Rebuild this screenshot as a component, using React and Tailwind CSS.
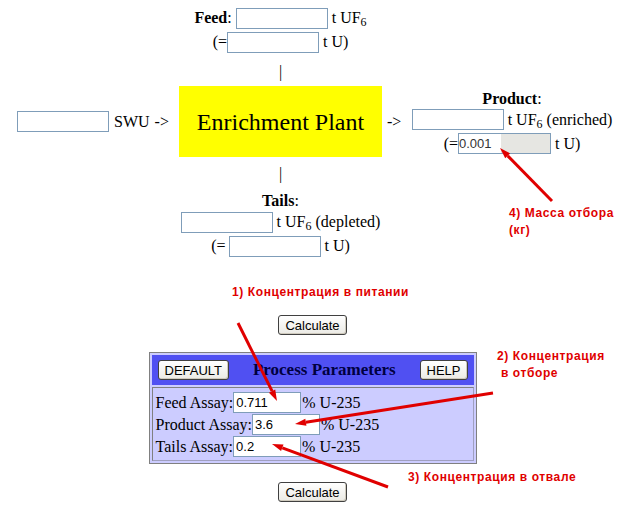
import React from "react";

const inputBase =
  "h-[21px] border border-[#7f9db9] bg-white px-[2px] font-['Liberation_Sans',Arial,sans-serif] text-[13px] text-black outline-none";

const Field = ({ width = "w-[92px]", value = "", className = "" }) => (
  <input readOnly value={value} className={`${inputBase} ${width} ${className}`} />
);

const XpButton = ({ children }) => (
  <button className="h-[20px] px-[6px] rounded-[3px] border border-[#404040] bg-[linear-gradient(#ffffff,#ebeae4)] font-['Liberation_Sans',Arial,sans-serif] text-[13px] leading-none text-black shadow-[inset_-1px_-1px_0_#cfcabd]">
    {children}
  </button>
);

// red callout arrows, tip at "to"
const arrows = [
  { from: [238, 323], to: [277, 401] },
  { from: [493, 393], to: [295, 424] },
  { from: [388, 487], to: [272, 444] },
  { from: [552, 201], to: [500, 148] }
];

const Arrow = ({ from, to }) => {
  const [x1, y1] = from;
  const [x2, y2] = to;
  const len = Math.hypot(x2 - x1, y2 - y1);
  const ux = (x2 - x1) / len;
  const uy = (y2 - y1) / len;
  const bx = x2 - ux * 11;
  const by = y2 - uy * 11;
  const px = -uy * 3.5;
  const py = ux * 3.5;
  return (
    <g>
      <line x1={x1} y1={y1} x2={bx} y2={by} stroke="#e00000" strokeWidth="3" />
      <polygon
        points={`${x2},${y2} ${bx + px},${by + py} ${bx - px},${by - py}`}
        fill="#e00000"
      />
    </g>
  );
};

const Note = ({ className, children }) => (
  <div
    className={`absolute whitespace-pre font-['Liberation_Sans',Arial,sans-serif] text-[12px] font-bold leading-[17px] tracking-[0.6px] text-[#e00000] ${className}`}
  >
    {children}
  </div>
);

const App = () => {
  return (
    <div className="relative w-[618px] h-[514px] overflow-hidden bg-white font-['Liberation_Serif','Times_New_Roman',serif] text-[16px] text-black">
      <div className="grid grid-cols-[179px_203px_236px]">
        {/* feed stream */}
        <div className="col-start-2 flex flex-col items-center whitespace-nowrap pt-[6px]">
          <div className="flex h-[24px] items-center">
            <span>
              <b>Feed</b>:
            </span>
            <Field className="ml-[4px]" />
            <span className="ml-[4px]">
              t UF<sub>6</sub>
            </span>
          </div>
          <div className="flex h-[24px] items-center">
            <span>(=</span>
            <Field />
            <span className="ml-[4px]">t U)</span>
          </div>
          <div className="mt-[9px] h-[18px] leading-[18px] text-black">|</div>
          <div className="h-[5px]" />
        </div>

        {/* separative work */}
        <div className="col-start-1 flex items-center whitespace-nowrap pl-[17px]">
          <Field />
          <span className="ml-[5px]">SWU</span>
          <span className="ml-[5px]">-&gt;</span>
        </div>

        <div className="flex h-[71px] w-[203px] items-center justify-center bg-[#ffff00] text-[24px]">
          Enrichment Plant
        </div>

        {/* product stream */}
        <div className="flex items-center whitespace-nowrap">
          <span className="w-[24px] pl-[5px]">-&gt;</span>
          <div className="flex w-[212px] flex-col items-center pt-[2px]">
            <div className="h-[18px] leading-[18px]">
              <b>Product</b>:
            </div>
            <div className="flex h-[24px] items-center">
              <Field />
              <span className="ml-[4px]">
                t UF<sub>6</sub> (enriched)
              </span>
            </div>
            <div className="flex h-[24px] items-center">
              <span>(=</span>
              <input
                readOnly
                value="0.001"
                className="h-[21px] w-[93px] border border-[#7f9db9] bg-[linear-gradient(to_right,#ffffff_42px,#e6e6e2_42px)] px-0 font-['Liberation_Sans',Arial,sans-serif] text-[13px] text-[#333] outline-none"
              />
              <span className="ml-[4px]">t U)</span>
            </div>
          </div>
        </div>

        {/* tails stream */}
        <div className="col-start-2 flex flex-col items-center whitespace-nowrap">
          <div className="mt-[8px] h-[18px] leading-[18px] text-black">|</div>
          <div className="mt-[9px] h-[18px] leading-[18px]">
            <b>Tails</b>:
          </div>
          <div className="flex h-[24px] items-center">
            <Field />
            <span className="ml-[4px]">
              t UF<sub>6</sub> (depleted)
            </span>
          </div>
          <div className="flex h-[24px] items-center">
            <span>(=</span>
            <Field className="ml-[3px]" />
            <span className="ml-[4px]">t U)</span>
          </div>
        </div>
      </div>

      <div className="flex flex-col items-center pl-[7px]">
        <div className="mt-[57px] flex">
          <XpButton>Calculate</XpButton>
        </div>

        {/* process parameters table */}
        <div className="mt-[17px] w-[328px] border border-[#808080] bg-[#ccccff] p-[2px]">
          <div className="flex h-[30px] items-center bg-[#5050f2] px-[6px]">
            <XpButton>DEFAULT</XpButton>
            <div className="flex-1 text-center text-[17px] font-bold text-[#000040]">
              Process Parameters
            </div>
            <XpButton>HELP</XpButton>
          </div>
          <div className="mt-[2px] border border-t-[#808080] border-l-[#808080] border-r-[#a0a0c0] border-b-[#a0a0c0] pl-[3px] pt-[4px] pb-[3px]">
            <div className="flex h-[21px] items-center whitespace-nowrap">
              <span>Feed Assay:</span>
              <Field width="w-[68px]" value="0.711" />
              <span className="ml-[1px]">% U-235</span>
            </div>
            <div className="mt-[1px] flex h-[21px] items-center whitespace-nowrap">
              <span>Product Assay:</span>
              <Field width="w-[68px]" value="3.6" />
              <span className="ml-[1px]">% U-235</span>
            </div>
            <div className="mt-[1px] flex h-[21px] items-center whitespace-nowrap">
              <span>Tails Assay:</span>
              <Field width="w-[68px]" value="0.2" />
              <span className="ml-[1px]">% U-235</span>
            </div>
          </div>
        </div>

        <div className="mt-[18px] flex">
          <XpButton>Calculate</XpButton>
        </div>
      </div>

      {/* callouts */}
      <Note className="left-[509px] top-[205px]">{"4) Масса отбора\n(кг)"}</Note>
      <Note className="left-[232px] top-[284px]">1) Концентрация в питании</Note>
      <Note className="left-[497px] top-[348px]">{"2) Концентрация\n в отборе"}</Note>
      <Note className="left-[408px] top-[469px]">3) Концентрация в отвале</Note>

      <svg className="pointer-events-none absolute left-0 top-0" width="618" height="514">
        {arrows.map((a, i) => (
          <Arrow key={i} from={a.from} to={a.to} />
        ))}
      </svg>
    </div>
  );
};

export default App;
